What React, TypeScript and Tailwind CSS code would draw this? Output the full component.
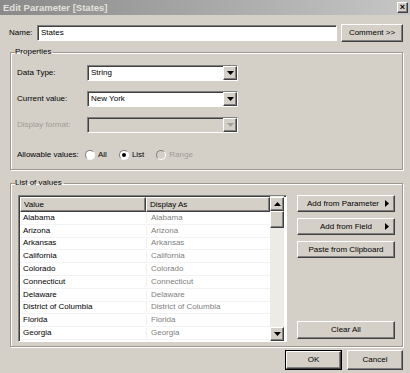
import React from "react";

const raised =
  "border border-t-white border-l-white border-r-[#404040] border-b-[#404040] shadow-[inset_-1px_-1px_0_#808080] bg-[#d4d0c8]";
const sunken =
  "border border-t-[#808080] border-l-[#808080] border-r-white border-b-white shadow-[inset_1px_1px_0_#404040]";

const Arrow = ({ dir = "down", color = "#000" }: { dir?: "down" | "up" | "right"; color?: string }) => {
  if (dir === "right")
    return (
      <svg width="4" height="7" viewBox="0 0 4 7">
        <path d="M0 0l4 3.5L0 7z" fill={color} />
      </svg>
    );
  return (
    <svg width="7" height="4" viewBox="0 0 7 4">
      <path d={dir === "down" ? "M0 0h7L3.5 4z" : "M0 4h7L3.5 0z"} fill={color} />
    </svg>
  );
};

const Select = ({ value, disabled }: { value?: string; disabled?: boolean }) => (
  <div className={`${sunken} flex h-[16px] w-[151px] items-center ${disabled ? "bg-[#d4d0c8]" : "bg-white"}`}>
    <span className="flex-1 truncate pl-[3px]">{value}</span>
    <div className={`${raised} flex h-full w-[14px] items-center justify-center`}>
      <Arrow color={disabled ? "#a0a0a0" : "#000"} />
    </div>
  </div>
);

const Radio = ({ label, checked, disabled }: { label: string; checked?: boolean; disabled?: boolean }) => (
  <div className={`flex items-center gap-[3px] ${disabled ? "text-[#a09c94]" : ""}`}>
    <div
      className={`flex h-[10px] w-[10px] items-center justify-center rounded-full border border-t-[#808080] border-l-[#808080] border-r-white border-b-white ${
        disabled ? "bg-[#d4d0c8]" : "bg-white"
      }`}
    >
      {checked && <div className="h-[4px] w-[4px] rounded-full bg-black" />}
    </div>
    <span>{label}</span>
  </div>
);

const groupBox =
  "border border-[#9c9890] shadow-[1px_1px_0_#fff,inset_1px_1px_0_#fff]";

const states = [
  "Alabama",
  "Arizona",
  "Arkansas",
  "California",
  "Colorado",
  "Connecticut",
  "Delaware",
  "District of Columbia",
  "Florida",
  "Georgia",
];

export default function App() {
  return (
    <div className="flex h-[373px] w-[410px] flex-col overflow-hidden bg-[#d4d0c8] font-['Liberation_Sans',Arial,sans-serif] text-[8px] leading-[10px] text-black">
      {/* title bar */}
      <div className="flex h-[15px] items-center justify-between bg-gradient-to-r from-[#8a8a8a] to-[#c6c6c6] pl-[3px] pr-[2px]">
        <span className="text-[9.5px] font-bold text-[#e4e2dc]">Edit Parameter [States]</span>
        <div className={`${raised} flex h-[11px] w-[11px] items-center justify-center text-[9px] font-bold leading-none`}>
          ×
        </div>
      </div>

      {/* name row */}
      <div className="mt-[9px] flex items-center pl-[9px]">
        <span className="w-[28px]">Name:</span>
        <div className={`${sunken} flex h-[16px] w-[300px] items-center bg-white pl-[3px]`}>States</div>
        <button className={`${raised} ml-[4px] h-[18px] w-[62px]`}>Comment &gt;&gt;</button>
      </div>

      {/* properties */}
      <fieldset className={`${groupBox} ml-[10px] mt-[5px] w-[393px] px-[6px] pb-[6px]`}>
        <legend className="-ml-[2px] pr-[2px]">Properties</legend>
        <div className="mt-[8px] flex flex-col gap-[10px]">
          <div className="flex items-center">
            <span className="w-[70px]">Data Type:</span>
            <Select value="String" />
          </div>
          <div className="flex items-center">
            <span className="w-[70px]">Current value:</span>
            <Select value="New York" />
          </div>
          <div className="flex items-center">
            <span className="w-[70px] text-[#a09c94]">Display format:</span>
            <Select disabled />
          </div>
          <div className="mt-[4px] flex h-[16px] items-center">
            <span className="w-[68px]">Allowable values:</span>
            <div className="flex items-center gap-[12px]">
              <Radio label="All" />
              <Radio label="List" checked />
              <Radio label="Range" disabled />
            </div>
          </div>
        </div>
      </fieldset>

      {/* list of values */}
      <fieldset className={`${groupBox} ml-[10px] mt-[8px] w-[393px] pb-[4px] pl-[7px]`}>
        <legend className="-ml-[3px] pr-[2px]">List of values</legend>
        <div className="mt-[7px] flex">
          <div className={`${sunken} flex h-[147px] w-[269px] bg-white`}>
            <div className="flex w-[251px] flex-col pl-[1px] pt-[1px]">
              <div className="flex h-[15px]">
                <div className={`${raised} flex w-[126px] items-center pl-[3px]`}>Value</div>
                <div className={`${raised} flex flex-1 items-center pl-[3px]`}>Display As</div>
              </div>
              {states.map((s) => (
                <div key={s} className="flex h-[12.8px] items-center border-b border-[#f3f3f3]">
                  <span className="w-[126px] pl-[3px]">{s}</span>
                  <span className="flex-1 border-l border-[#f0f0f0] pl-[4px] text-[#808080]">{s}</span>
                </div>
              ))}
            </div>
            <div className="flex w-[14px] flex-col bg-[#ecebe6] pt-[1px]">
              <div className={`${raised} flex h-[14px] items-center justify-center`}>
                <Arrow dir="up" />
              </div>
              <div className={`${raised} h-[17px]`} />
              <div className="flex-1" />
              <div className={`${raised} flex h-[14px] items-center justify-center`}>
                <Arrow />
              </div>
            </div>
          </div>
          <div className="ml-[10px] flex w-[98px] flex-col">
            <button className={`${raised} relative flex h-[17px] items-center justify-center`}>
              <span className="pr-[6px]">Add from Parameter</span>
              <span className="absolute right-[5px] top-[4px]">
                <Arrow dir="right" />
              </span>
            </button>
            <button className={`${raised} relative mt-[6px] flex h-[17px] items-center justify-center`}>
              <span>Add from Field</span>
              <span className="absolute right-[5px] top-[4px]">
                <Arrow dir="right" />
              </span>
            </button>
            <button className={`${raised} mt-[6px] flex h-[17px] items-center justify-center`}>
              Paste from Clipboard
            </button>
            <div className="flex-1" />
            <button className={`${raised} mb-[3px] flex h-[18px] items-center justify-center`}>Clear All</button>
          </div>
        </div>
      </fieldset>

      {/* footer */}
      <div className="mt-[3px] flex justify-end gap-[5px] pr-[7px]">
        <div className="border border-black">
          <button className={`${raised} h-[18px] w-[55px]`}>OK</button>
        </div>
        <button className={`${raised} h-[20px] w-[56px]`}>Cancel</button>
      </div>
    </div>
  );
}
